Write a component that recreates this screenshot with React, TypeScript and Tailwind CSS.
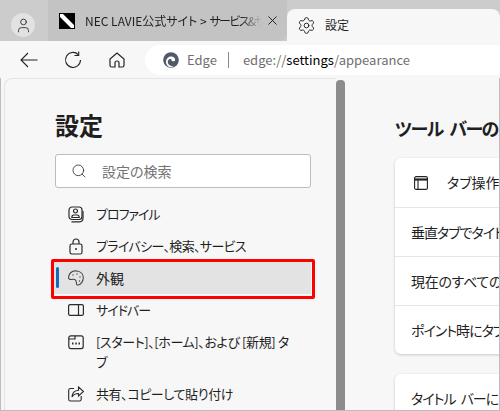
import { Settings, Search, X, User } from 'lucide-react';

const font = "font-['Noto_Sans_CJK_JP','Noto_Sans','Liberation_Sans',sans-serif] [font-feature-settings:'palt']";

function BackIcon() {
  return (
    <svg width="18" height="16" viewBox="0 0 18 16" fill="none" stroke="#222" strokeWidth="1.1">
      <path d="M1 8h16.500M8 1 1 8l7 7" />
    </svg>
  );
}

function RefreshIcon() {
  return (
    <svg width="18" height="18" viewBox="0 0 18 18" fill="none" stroke="#222" strokeWidth="1.1">
      <path d="M14.200 3.500A7.500 7.500 0 1 0 16.500 9" />
      <path d="M10.500 4.500h4.200V.5" />
    </svg>
  );
}

function HomeIcon() {
  return (
    <svg width="16" height="16" viewBox="0 0 16 16" fill="none" stroke="#222" strokeWidth="1.2">
      <path d="M6 15H2.500C1.700 15 1 14.300 1 13.500V7L8 1l7 6v6.500c0 .8-.7 1.500-1.500 1.500H10v-4c0-1-.9-2-2-2s-2 1-2 2z" />
    </svg>
  );
}

function ProfileIcon() {
  return (
    <svg width="16" height="17" viewBox="0 0 16 17" fill="none" stroke="#2a2a2a" strokeWidth="1.2">
      <rect x="1" y="1" width="13" height="12.500" rx="3" />
      <circle cx="7.500" cy="5" r="2" />
      <path d="M3.800 11.500c0-1.800 1-2.500 2-2.500h3.400c1 0 2 .7 2 2.500z" />
      <path d="M3.500 15.800h8c2 0 3.500-1.300 3.500-3.500V5" />
    </svg>
  );
}

function LockIcon() {
  return (
    <svg width="14" height="17" viewBox="0 0 14 17" fill="none" stroke="#2a2a2a" strokeWidth="1.2">
      <rect x="1" y="6" width="12" height="10" rx="1.800" />
      <path d="M4 6V4a3 3 0 0 1 6 0v2" />
      <circle cx="7" cy="11" r="1" fill="#2a2a2a" stroke="none" />
    </svg>
  );
}

function ShareIcon() {
  return (
    <svg width="16" height="16" viewBox="0 0 16 16" fill="none" stroke="#2a2a2a" strokeWidth="1.1">
      <path d="M6 2.500H2.500c-1 0-1.800.8-1.800 1.800v8.900c0 1 .8 1.800 1.800 1.800h8.900c1 0 1.800-.8 1.800-1.800V10" />
      <path d="M10.500 1 15.500 5.500 10.500 10V7.500C8 7.500 5.500 8.500 4 11c.2-3.800 2.800-6.500 6.500-6.800z" />
    </svg>
  );
}

function PaletteIcon() {
  return (
    <svg width="18" height="18" viewBox="0 0 18 18" fill="none" stroke="#444" strokeWidth="1.1">
      <path d="M1.500 8C2.500 3.500 6 1.500 10 2c4 .6 6.500 3.500 6.300 7-.2 3.500-2.500 6.500-5 7-1.800.3-1.800-1.200-2-3-.2-1.800-1.300-3-3.300-2.700-2 .3-4.700.7-4.500-2.300z" />
      <circle cx="6" cy="6" r=".7" fill="#444" stroke="none" />
      <circle cx="10" cy="5" r=".7" fill="#444" stroke="none" />
      <circle cx="13" cy="8" r=".7" fill="#444" stroke="none" />
      <circle cx="12.500" cy="12" r=".7" fill="#444" stroke="none" />
    </svg>
  );
}

function SidebarIcon() {
  return (
    <svg width="16" height="14" viewBox="0 0 16 14" fill="none" stroke="#2a2a2a" strokeWidth="1.2">
      <rect x=".6" y="1.600" width="14.800" height="10.800" rx="1.500" />
      <path d="M10.500 1.600v10.800" />
    </svg>
  );
}

function StartIcon() {
  return (
    <svg width="16" height="16" viewBox="0 0 16 16" fill="none" stroke="#2a2a2a" strokeWidth="1.2">
      <rect x=".8" y="1.800" width="14.400" height="12.800" rx="2" />
      <path d="M.8 5h6.200V1.800" />
      <path d="M4 9.500h1.500M7.300 9.500h1.500M10.500 9.500h1.500" strokeWidth="1.800" />
    </svg>
  );
}

function TabActionIcon() {
  return (
    <svg width="14" height="14" viewBox="0 0 14 14" fill="none" stroke="#222" strokeWidth="1.1">
      <rect x=".6" y=".6" width="12.800" height="12.800" rx="1.500" />
      <path d="M.6 3.500h12.800" strokeWidth="2.200" />
      <path d="M4 3.500v9.900" />
    </svg>
  );
}

function EdgeIcon() {
  return (
    <svg width="16" height="16" viewBox="0 0 16 16">
      <circle cx="8" cy="8" r="7.800" fill="#4f5b67" />
      <path d="M3 10c0-3.500 2.600-5.500 5.200-5.500 2.300 0 4 1.400 4 3.200 0 1-.9 1.500-2.200 1.500-.9 0-1.400-.4-1.400-1 .1-.9-1-1.500-2.300-.9C4.800 7.900 4.500 9.500 5 11.300c.8 2 3 3.300 6 2.800-1.200 1-2.700 1.300-4 1-2.400-.5-4-2.700-4-5.100z" fill="#fff" />
    </svg>
  );
}

const navItems = [
  { icon: <ProfileIcon />, label: 'プロファイル', text: 'text-[13px] tracking-[-1px]' },
  { icon: <LockIcon />, label: 'プライバシー、検索、サービス', text: 'text-[13px] tracking-[-0.65px]' },
  { icon: <PaletteIcon />, label: '外観', text: 'text-[14px]', active: true },
  { icon: <SidebarIcon />, label: 'サイドバー', text: 'text-[13px] tracking-[-1px]' },
  { icon: <StartIcon />, label: '[スタート]、[ホーム]、および [新規] タ\nブ', text: 'text-[13px] tracking-[-0.4px]' },
  { icon: <ShareIcon />, label: '共有、コピーして貼り付け', text: 'text-[13px] tracking-[-0.4px]' },
];

const card1 = [
  { label: '垂直タブでタイトル バーを非表示にする', text: 'tracking-[-1px]' },
  { label: '現在のすべてのタブを表示する', text: 'tracking-[-0.3px]' },
  { label: 'ポイント時にタブのプレビューを表示する', text: 'tracking-[-1px]' },
];

export default function App() {
  return (
    <div className={`${font} relative flex h-[411px] w-[500px] flex-col overflow-hidden bg-[#f7f7f7] text-[#1f1f1f]`}>
      {/* タブ */}
      <div className="flex h-[41px] shrink-0 bg-[#cccccc]">
        <div className="ml-[11px] mt-[13px] flex h-[24px] w-[24px] items-center justify-center rounded-full bg-[#e2e2e2]">
          <User size={17} strokeWidth={1.3} color="#333" />
        </div>
        <div className="ml-[13px] flex h-full w-[239px] items-center rounded-br-lg bg-[#c3c3c3] pl-[11px]">
          <div className="flex h-[16px] w-[16px] shrink-0 items-center justify-center bg-black">
            <svg width="14" height="14" viewBox="0 0 14 14"><path d="M0 0h3l11 11v3h-3L0 3z" fill="#fff" /></svg>
          </div>
          <span className="ml-[10px] w-[177px] overflow-hidden whitespace-nowrap text-[12px] [mask-image:linear-gradient(to_right,black_88%,transparent)]">
            NEC LAVIE公式サイト &gt; <span className="tracking-[-1.6px]">サービス&amp;サポート</span>
          </span>
          <X size={15} strokeWidth={1.4} color="#111" className="ml-[3px] shrink-0" />
        </div>
        <div className="mt-[9px] flex flex-1 items-center rounded-t-lg bg-[#f7f7f7] pl-[10px]">
          <Settings size={19} strokeWidth={1.2} color="#222" />
          <span className="ml-[9px] text-[12px]">設定</span>
        </div>
      </div>

      {/* ツールバー */}
      <div className="flex h-[37px] shrink-0 items-center bg-[#f7f7f7] pb-[3px] pl-[20px] pt-[4px]">
        <BackIcon />
        <span className="ml-[26px]"><RefreshIcon /></span>
        <span className="ml-[27px]"><HomeIcon /></span>
        <div className="ml-[20px] flex h-[30px] flex-1 items-center rounded-l-[15px] bg-white pl-[18px] text-[13px] text-[#6f6f6f]">
          <EdgeIcon />
          <span className="ml-[8px]">Edge</span>
          <span className="ml-[11px] h-[16px] w-px bg-[#8a8a8a]" />
          <span className="ml-[14px]">edge://<span className="text-black">settings</span>/appearance</span>
        </div>
      </div>

      {/* 本体 */}
      <div className="flex min-h-0 flex-1 border-x border-b border-[#bdbdbd]">
        <aside className="ml-[3px] w-[332px] shrink-0 rounded-tl-lg border-l border-t border-[#e4e4e4] bg-[#f7f7f7] pl-[48px] pt-[28px]">
          <h1 className="ml-[2px] text-[24px] font-bold leading-[36px]">設定</h1>
          <div className="ml-[2px] mt-[11px] flex h-[34px] w-[256px] items-center rounded-[3px] border border-[#bcbcbc] bg-white pl-[15px]">
            <Search size={16} strokeWidth={1.3} color="#333" />
            <span className="ml-[15px] text-[14px] text-[#737373]">設定の検索</span>
          </div>
          <nav className="mt-[10px] w-[258px]">
            {navItems.map((item) => (
              <div key={item.label} className={`relative flex gap-[11px] py-[6px] pl-[14px] pr-[10px] leading-[20px] ${item.text} ${item.active ? 'bg-[#e3e3e3]' : ''}`}>
                {item.active && <span className="absolute left-[3px] top-[5px] h-[21px] w-[3px] rounded bg-[#0f6cbd]" />}
                <span className="flex h-[20px] w-[18px] shrink-0 items-center justify-center">{item.icon}</span>
                <span className="whitespace-pre-line">{item.label}</span>
              </div>
            ))}
          </nav>
        </aside>
        <div className="mt-[2px] w-[9px] shrink-0 self-stretch rounded-t-sm bg-[#8c8c8c]" />
        <main className="min-w-0 flex-1 overflow-hidden pl-[50px] pt-[36px]">
          <h2 className="whitespace-nowrap text-[18px] font-bold leading-[28px] tracking-[-1.5px] [word-spacing:4px]">ツール バーのカスタマイズ</h2>
          <div className="mt-[16px] w-[300px] rounded-md bg-white text-[14px] shadow-[0_1px_3px_rgba(0,0,0,0.2)]">
            <div className="flex h-[49px] items-center whitespace-nowrap pl-[19px]">
              <TabActionIcon />
              <span className="ml-[19px]">タブ操作メニューを表示する</span>
            </div>
            {card1.map((row) => (
              <div key={row.label} className={`flex h-[49px] items-center whitespace-nowrap border-t border-[#e6e6e6] pl-[16px] ${row.text}`}>{row.label}</div>
            ))}
          </div>
          <div className="mt-[20px] w-[300px] rounded-md bg-white text-[14px] shadow-[0_1px_3px_rgba(0,0,0,0.2)]">
            <div className="flex h-[49px] items-center whitespace-nowrap pl-[16px] tracking-[-1px] [word-spacing:3px]">タイトル バーにプロファイルを表示する</div>
          </div>
        </main>
      </div>

      {/* 赤枠 */}
      <div className="absolute left-[51px] top-[259px] h-[40px] w-[264px] rounded-[2px] border-[3px] border-[#ff0000]" />
    </div>
  );
}
